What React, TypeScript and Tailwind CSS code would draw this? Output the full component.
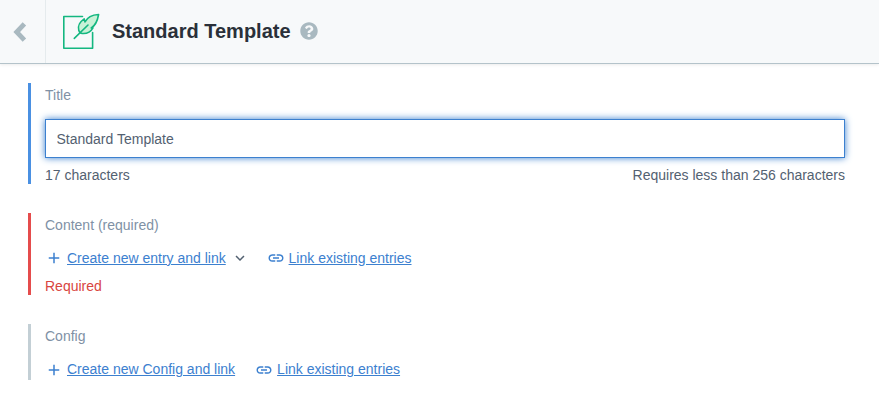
import React from "react";
import { FaQuestionCircle } from "react-icons/fa";
import { MdAdd, MdExpandMore, MdLink } from "react-icons/md";

function EntryIcon() {
  return (
    <svg width="38" height="38" viewBox="0 0 38 38" fill="none" stroke="#14b780" strokeWidth="1.6" strokeLinecap="round" strokeLinejoin="round">
      <path d="M20.5 3.5H1.8V35.3H30.6V19.6" />
      <path d="M36.6 1.5C29.5 1.8 25.5 3.8 23 9L22.2 5.9C18.4 8.5 15.3 13 16.8 17.5C17.4 19.2 18.6 20.5 20.2 20.5C25.5 20.9 28.8 18.9 31 14.9H29.2C34 12.2 35.6 7.3 36.6 1.5Z" fill="#c8f2d7" />
      <path d="M12.3 25.4L26 12" />
    </svg>
  );
}

interface FieldProps {
  label: string;
  className: string;
  children: React.ReactNode;
}

function Field({ label, className, children }: FieldProps) {
  return (
    <section className={`border-l-3 pl-3.5 ${className}`}>
      <div className="h-6 leading-6 text-[#8091a5]">{label}</div>
      {children}
    </section>
  );
}

function Action({ icon, text }: { icon: React.ReactNode; text: string }) {
  return (
    <button className="flex items-center gap-1 text-[#3c80cf]">
      {icon}
      <span className="underline">{text}</span>
    </button>
  );
}

export default function App() {
  return (
    <div className="h-[404px] overflow-hidden bg-white font-['Liberation_Sans',Arial,sans-serif] text-sm text-[#536171]">
      <header className="flex h-16 items-center border-b border-[#b4c3ca] bg-[#f7f9fa] shadow-[0_1px_3px_rgba(0,0,0,0.08)]">
        <button className="flex h-full w-[46px] items-center border-r border-[#e5ebed] pl-[13px]" aria-label="Back">
          <svg width="14" height="20" viewBox="0 0 14 20" fill="none" stroke="#a9b9c0" strokeWidth="4.8">
            <path d="M11.4 1.9L3.7 10L11.4 18.1" />
          </svg>
        </button>
        <div className="ml-4 flex items-center">
          <EntryIcon />
          <h1 className="ml-3 pb-0.5 text-xl leading-6 font-bold text-[#2a3039]">Standard Template</h1>
          <FaQuestionCircle className="ml-[9px] mb-px text-[#a9b9c0]" size={18} />
        </div>
      </header>
      <main className="pt-[19px] pr-[34px] pl-7">
        <Field label="Title" className="h-[101px] border-[#4a90e2]">
          <input
            className="mt-3 block h-[39px] w-full border border-[#3c80cf] bg-white px-[10.5px] text-[#536171] shadow-[0_0_7px_#3c80cf] outline-none"
            defaultValue="Standard Template"
          />
          <div className="mt-[7px] flex justify-between leading-5">
            <span>17 characters</span>
            <span>Requires less than 256 characters</span>
          </div>
        </Field>
        <Field label="Content (required)" className="mt-[29px] h-[82px] border-[#e54c4c]">
          <div className="mt-[11px] flex h-5 items-center">
            <Action icon={<MdAdd size={18} />} text="Create new entry and link" />
            <MdExpandMore className="ml-[5px]" size={18} />
            <div className="ml-[17.8px]">
              <Action icon={<MdLink size={18} />} text="Link existing entries" />
            </div>
          </div>
          <div className="mt-2 leading-5 text-[#d9453f]">Required</div>
        </Field>
        <Field label="Config" className="mt-[29px] h-14 border-[#c3cfd5]">
          <div className="mt-[11px] flex h-5 items-center gap-5">
            <Action icon={<MdAdd className="mt-0.5" size={18} />} text="Create new Config and link" />
            <Action icon={<MdLink className="mt-0.5" size={18} />} text="Link existing entries" />
          </div>
        </Field>
      </main>
    </div>
  );
}
